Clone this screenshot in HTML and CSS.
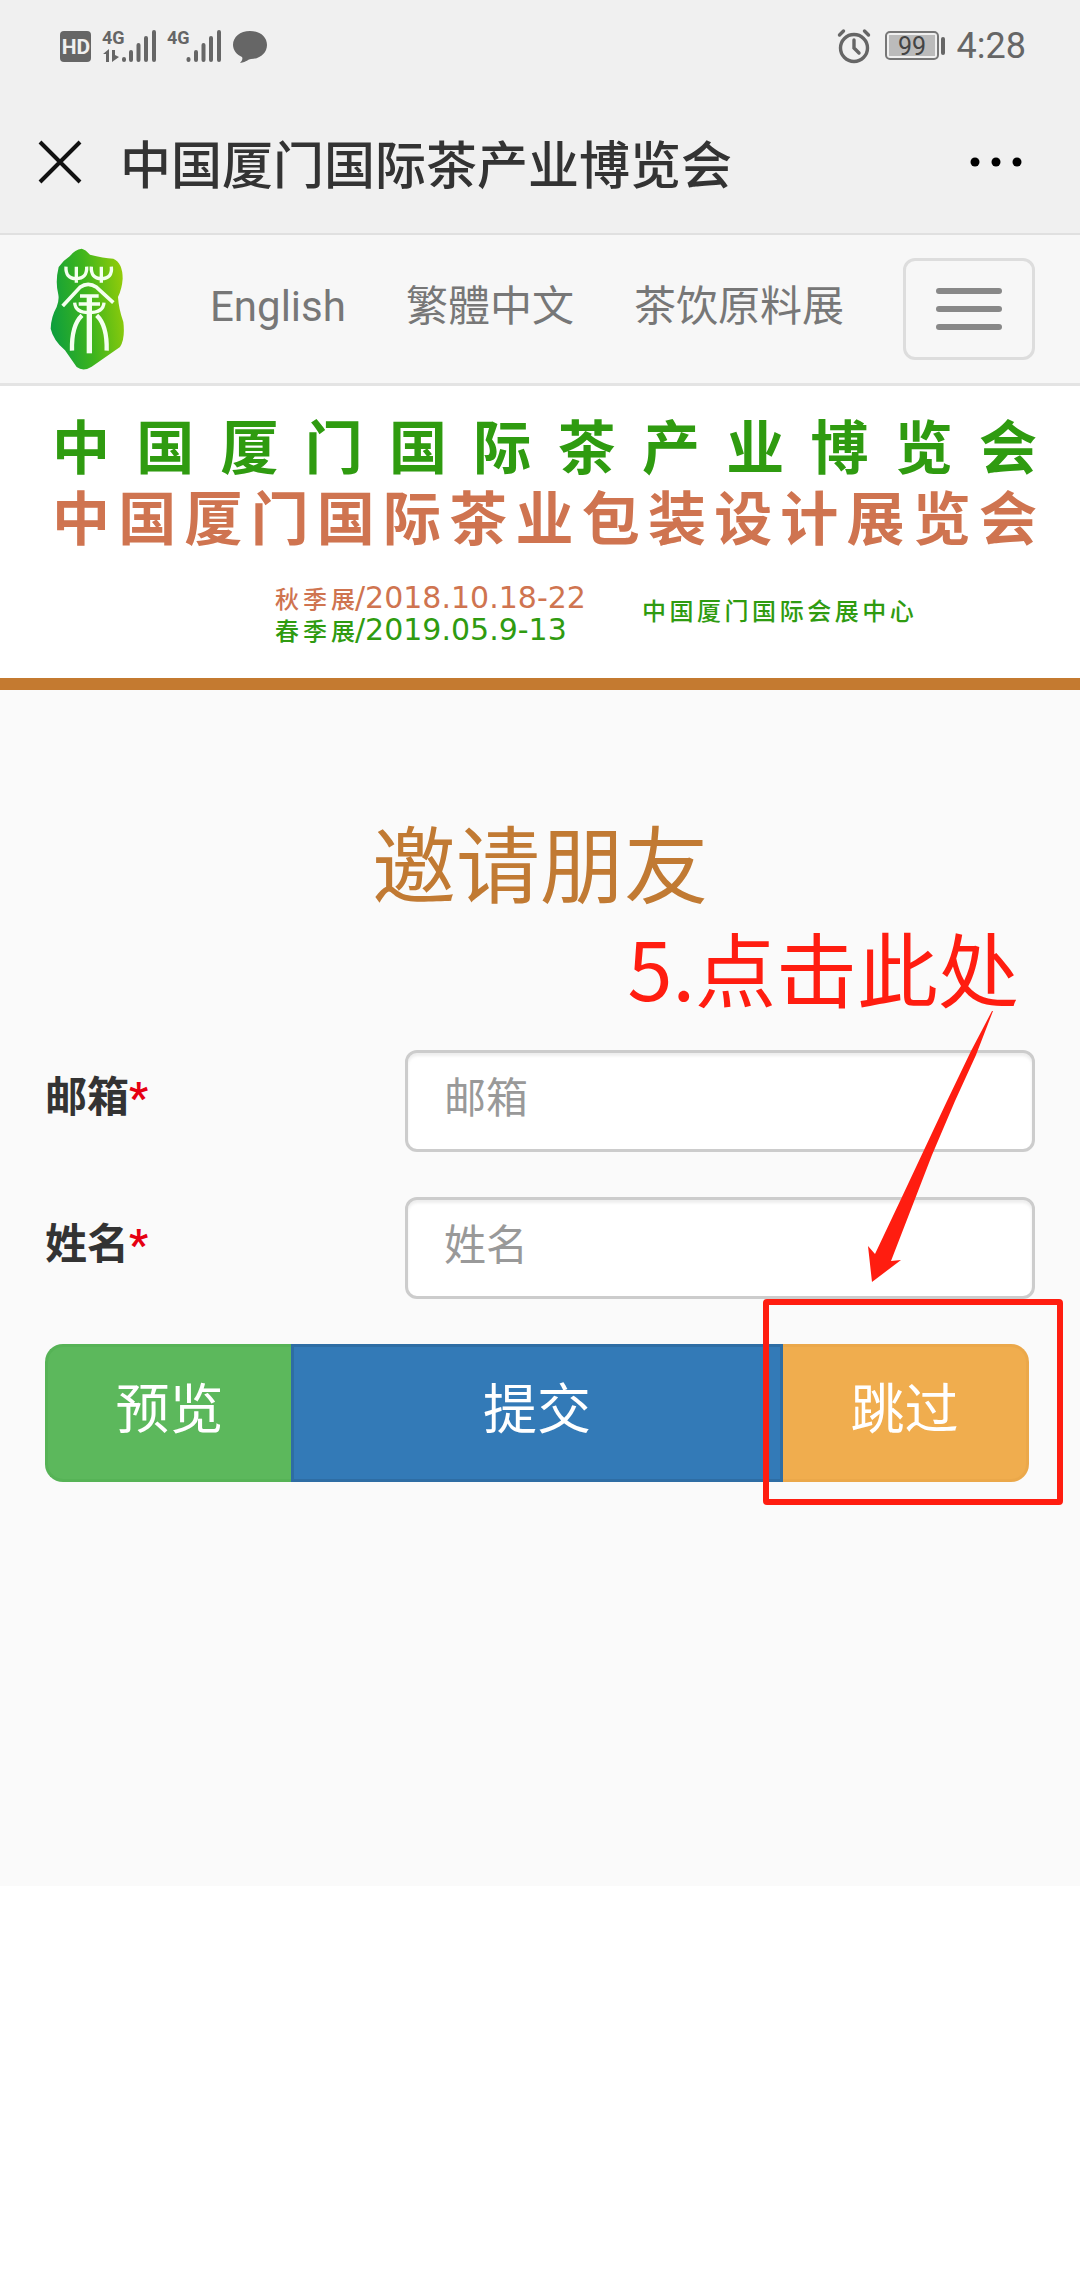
FILE: index.html
```html
<!DOCTYPE html>
<html lang="zh-CN">
<head>
  <meta charset="UTF-8" />
  <meta name="viewport" content="width=device-width, initial-scale=1.0">
  <title>中国厦门国际茶产业博览会</title>
  <link rel="stylesheet" href="styles.css">
</head>
<body>

<!-- Phone status bar -->
<div class="status-bar">
  <svg class="status-left" width="210" height="40" viewBox="0 0 210 40">
    <rect x="0" y="5" width="31" height="31" rx="4" />
    <text x="16" y="28" class="hd" text-anchor="middle">HD</text>
    <text x="42" y="18" class="net">4G</text>
    <path d="M43 28l6-5v13h-3v-8zM52 24h3v5l4 2-7 5z" />
    <path class="bars" d="M64 33v1M71 26v8M78.500 19v15M86 12v22M94 6v28" />
    <text x="107" y="18" class="net">4G</text>
    <path class="bars" d="M128.500 33v1M136 26v8M143.500 19v15M151 12v22M159 6v28" />
    <path d="M190 5c10 0 17 6 17 14s-7 14-16 14c-3 0-4 3-11 4 2-2 3-4 2-6-5-2-9-7-9-12 0-8 7-14 17-14z" />
  </svg>
  <div class="status-right">
    <svg width="34" height="36" viewBox="0 0 34 36">
      <g fill="none" stroke="#666" stroke-width="3.400" stroke-linecap="round">
        <circle cx="17" cy="20" r="13.500" />
        <path d="M17 12v8l5 5M2.500 7l4-4M31.500 7l-4-4" />
      </g>
    </svg>
    <svg width="62" height="30" viewBox="0 0 62 30">
      <rect x="3" y="1" width="52" height="27" rx="4" fill="none" stroke="#777" stroke-width="2" />
      <rect x="6" y="4" width="46" height="21" fill="#bbb" />
      <text x="29" y="24" class="battery" text-anchor="middle">99</text>
      <rect x="58" y="6" width="4" height="18" rx="2" />
    </svg>
    <span>4:28</span>
  </div>
</div>

<!-- Browser title bar -->
<header class="title-bar">
  <button class="icon-btn" aria-label="关闭">
    <svg width="44" height="44" viewBox="0 0 44 44">
      <path d="M2 2l40 40M42 2L2 42" fill="none" stroke="#111" stroke-width="4" />
    </svg>
  </button>
  <div class="page-title">中国厦门国际茶产业博览会</div>
  <button class="icon-btn" aria-label="更多">
    <svg width="54" height="12" viewBox="0 0 54 12">
      <circle cx="6" cy="6" r="4.500" /><circle cx="27" cy="6" r="4.500" /><circle cx="48" cy="6" r="4.500" />
    </svg>
  </button>
</header>

<!-- Navbar -->
<nav class="navbar">
  <a href="#" class="logo" aria-label="首页">
    <svg width="76" height="122" viewBox="150 68 228 366">
      <defs>
        <linearGradient id="leaf" x1="0" y1="0.500" x2="1" y2="0.300">
          <stop offset="0" stop-color="#0f9f3c" />
          <stop offset="0.500" stop-color="#3fb51c" />
          <stop offset="1" stop-color="#93cc0a" />
        </linearGradient>
      </defs>
      <path fill="url(#leaf)" d="M245 70Q256 72 270 88Q310 98 340 100Q368 112 368 160Q366 190 354 215Q356 250 370 290Q376 340 360 365L275 424Q250 440 230 425L195 375Q160 345 152 310Q153 275 170 245Q178 225 175 208Q165 170 176 125Q190 105 210 92Q225 72 245 70Z" />
      <g fill="none" stroke="#f4fff0" stroke-width="10">
        <path d="M198 124Q196 160 228 160Q262 160 260 124M229 124V172M274 124Q272 160 304 160Q338 160 334 124M304 124V172" />
        <path d="M188 242L240 186Q264 168 290 186L340 232" stroke-width="11" />
        <path d="M240 212H296M224 232Q226 262 267 262Q310 262 312 232M236 236H300" />
        <path d="M268 212V384" stroke-width="16" />
        <path d="M246 270Q214 300 216 376M290 270Q322 300 320 376" stroke-width="13" />
      </g>
    </svg>
  </a>
  <div class="nav-links">
    <a href="#">English</a>
    <a href="#" lang="zh-TW">繁體中文</a>
    <a href="#">茶饮原料展</a>
  </div>
  <button class="navbar-toggle" aria-label="菜单">
    <span></span><span></span><span></span>
  </button>
</nav>

<!-- Banner -->
<section class="banner">
  <div class="banner-title green">中国厦门国际茶产业博览会</div>
  <div class="banner-title orange">中国厦门国际茶业包装设计展览会</div>
  <div class="banner-info">
    <div class="dates">
      <div class="orange"><span class="season">秋季展</span>/2018.10.18-22</div>
      <div class="green"><span class="season">春季展</span>/2019.05.9-13</div>
    </div>
    <div class="venue green">中国厦门国际会展中心</div>
  </div>
</section>

<!-- Invite form -->
<main class="invite">
  <h1>邀请朋友</h1>
  <form>
    <div class="form-group">
      <label for="email">邮箱<span class="required">*</span></label>
      <input type="text" id="email" placeholder="邮箱" />
    </div>
    <div class="form-group">
      <label for="name">姓名<span class="required">*</span></label>
      <input type="text" id="name" placeholder="姓名" />
    </div>
    <div class="btn-group">
      <button type="button" class="btn preview">预览</button>
      <button type="button" class="btn submit">提交</button>
      <button type="button" class="btn skip">跳过</button>
    </div>
  </form>

  <!-- Step marker -->
  <div class="step-text">5.点击此处</div>
  <svg class="step-arrow" width="126" height="272" viewBox="0 0 126 272">
    <path fill="#ff1d10" d="M126 0L109 44L88 90L65 144L24 250L34 249L5 271L1 235L8 243L34 188L80 90L104 40L125 0Z" />
  </svg>
  <div class="step-box"></div>
</main>

</body>
</html>
```
FILE: styles.css
```css
* { margin: 0; padding: 0; box-sizing: border-box; }
body {
  font-family: Roboto, "Noto Sans CJK SC", sans-serif;
  background: #fff;
  color: #333;
}
button { font-family: inherit; cursor: pointer; }
a { text-decoration: none; }

/* status bar */
.status-bar {
  display: flex; justify-content: space-between; align-items: center;
  height: 91px;
  padding: 0 54px 0 60px;
  background: #f0f0f0;
  color: #666;
}
.status-bar svg { fill: #666; }
.status-bar .hd { font-size: 21px; font-weight: bold; fill: #f0f0f0; }
.status-bar .net { font-size: 18px; font-weight: bold; }
.status-bar .battery { font-size: 25px; fill: #444; }
.bars { fill: none; stroke: #666; stroke-width: 4; stroke-linecap: round; }
.status-right {
  display: flex; align-items: center;
  gap: 12px;
  font-size: 36px;
}

/* title bar */
.title-bar {
  display: flex; align-items: center;
  height: 142px;
  padding: 0 57px 0 38px;
  background: #f0f0f0;
}
.icon-btn { display: flex; border: none; background: none; }
.page-title {
  flex: 1;
  margin-left: 38px;
  font-size: 51px; font-weight: 500;
}

/* navbar */
.navbar {
  display: flex; align-items: center;
  height: 153px;
  padding: 0 45px 0 50px;
  background: #f7f7f7;
  border-top: 2px solid #e0e0e0;
  border-bottom: 3px solid #e4e4e4;
}
.logo { display: flex; }
.nav-links {
  flex: 1;
  display: flex; gap: 60px;
  margin-left: 84px;
  padding-bottom: 4px;
}
.nav-links a { font-size: 42px; line-height: 60px; color: #777; }
.navbar-toggle {
  display: flex; flex-direction: column; gap: 12px;
  padding: 27px 30px;
  border: 3px solid #ddd;
  border-radius: 12px;
  background: none;
}
.navbar-toggle span { width: 66px; height: 6px; border-radius: 3px; background: #888; }

/* banner */
.banner {
  padding: 28px 43px 32px 52px;
  border-bottom: 12px solid #c47a30;
}
.green { color: #2f9b10; }
.orange { color: #cf7450; }
.banner-title {
  font-size: 58px; font-weight: bold;
  line-height: 71px;
  text-align-last: justify;
}
.banner-info {
  display: flex; align-items: flex-start;
  gap: 56px;
  margin: 26px 0 0 223px;
}
.dates { font-family: "DejaVu Sans", "Noto Sans CJK SC", sans-serif; font-size: 30px; line-height: 32px; }
.dates div { height: 32px; }
.season {
  display: inline-block;
  width: 80px;
  font-size: 24px; font-weight: 500;
  line-height: 24px;
  text-align-last: justify;
}
.venue {
  width: 272px;
  font-size: 24px; font-weight: 500;
  line-height: 60px;
  text-align-last: justify;
}

/* invite form */
.invite {
  position: relative;
  padding: 133px 45px 404px;
  background: #fafafa;
}
h1 {
  font-size: 84px; font-weight: normal;
  line-height: 92px;
  text-align: center;
  color: #c17a33;
}
form { margin-top: 135px; }
.form-group {
  display: grid; grid-template-columns: 4fr 7fr; align-items: center;
  margin-bottom: 45px;
}
label { padding-bottom: 6px; font-size: 42px; font-weight: bold; line-height: 60px; }
.required { color: #e60012; }
.form-group input {
  width: 100%; height: 102px;
  padding: 0 36px 6px;
  font-family: inherit; font-size: 42px;
  color: #555;
  background: #fff;
  border: 3px solid #ccc;
  border-radius: 12px;
  box-shadow: inset 0 3px 3px rgba(0,0,0,0.07);
}
.form-group input::placeholder { color: #999; }
.btn-group { display: grid; grid-template-columns: 1fr 2fr 1fr; margin-right: 6px; }
.btn {
  height: 138px;
  padding-bottom: 16px;
  font-size: 54px;
  color: #fff;
  border: 3px solid;
}
.preview { background: #5cb85c; border-color: #56b356; border-right: none; border-radius: 18px 0 0 18px; }
.submit { background: #337ab7; border-color: #2e6da4; }
.skip { background: #f0ad4e; border-color: #eba84a; border-left: none; border-radius: 0 18px 18px 0; }

/* step marker drawn over the form */
.step-text {
  position: absolute; top: 221px; right: 61px;
  font-family: "Noto Sans CJK SC", sans-serif;
  font-size: 81px; line-height: 110px;
  color: #ff1d10;
}
.step-arrow { position: absolute; top: 321px; right: 87px; }
.step-box {
  position: absolute; top: 609px; right: 17px;
  width: 300px; height: 206px;
  border: 6px solid #ff1d10;
  border-radius: 4px;
  pointer-events: none;
}
```
